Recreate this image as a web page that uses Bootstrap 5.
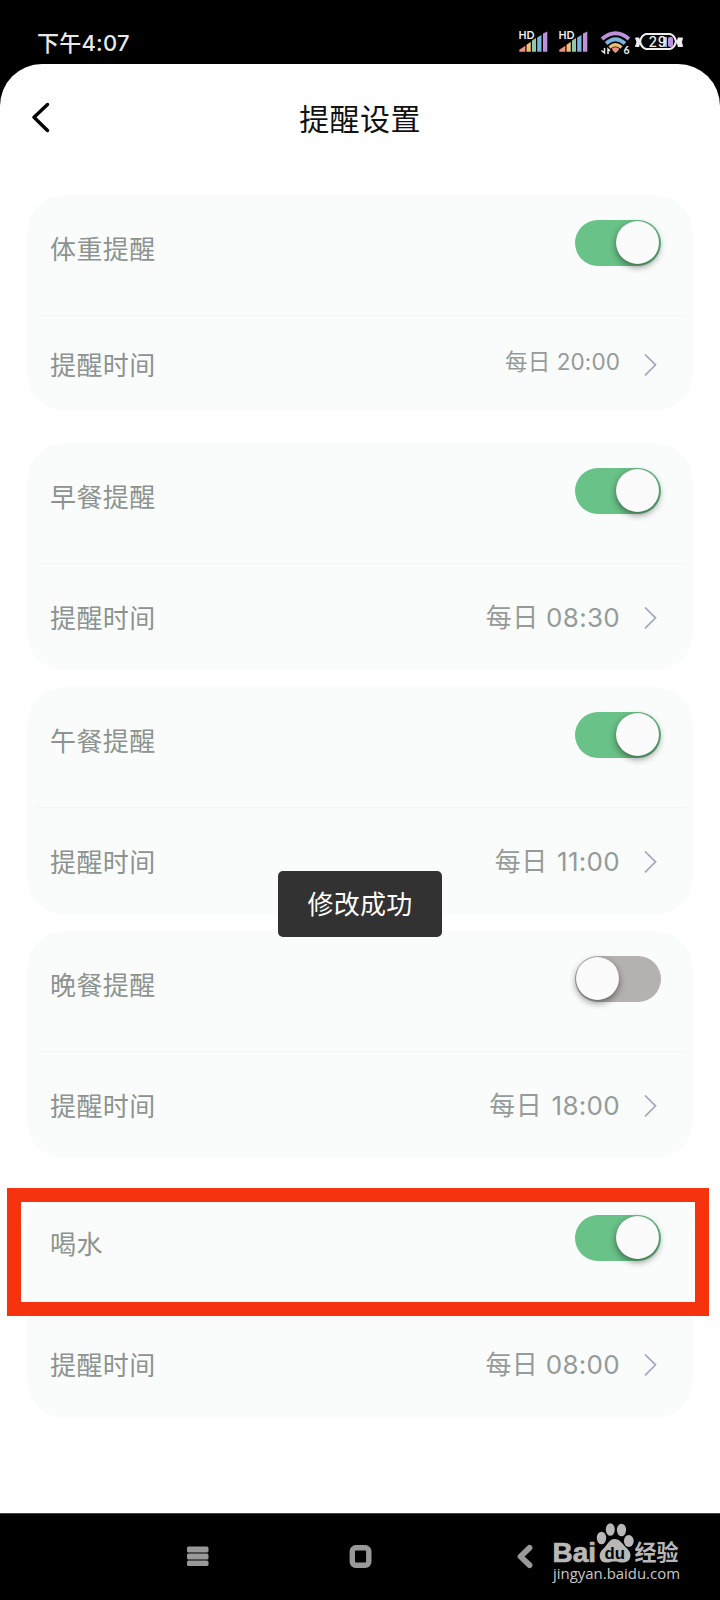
<!DOCTYPE html>
<html lang="zh-CN">
<head>
<meta charset="utf-8">
<meta name="viewport" content="width=device-width, initial-scale=1">
<title>提醒设置</title>
<link rel="stylesheet" href="https://cdn.jsdelivr.net/npm/bootstrap@5.3.0/dist/css/bootstrap.min.css">
<style>
  body { font-family: Inter, "Noto Sans CJK SC", sans-serif; background: #000; }
  svg { display: block; }
  .phone { width: 720px; height: 1600px; }
  .status-bar { height: 64px; padding: 19px 36px 0 37px; color: #e8e8e8; }
  .status-icons { margin-top: 6px; }
  .clock { font: 500 22px/48px Inter, "Noto Sans CJK SC", sans-serif; letter-spacing: .2px; }
  .screen { height: 1449px; border-radius: 42px 42px 0 0; background: #fff; }
  .title-bar { height: 131px; padding: 0 32px; }
  .title-bar h1 { font-size: 30px; line-height: 40px; color: #111; margin: 0; padding-top: 35px; letter-spacing: .4px; }
  .back-link { padding-top: 38px; width: 20px; }
  .remind { margin: 0 27px 16px; height: 228px; border: 0; border-radius: 38px; background: #fafcfb; }
  .remind.weight-card { height: 216px; margin-bottom: 32px; }
  .remind.gap-after { margin-bottom: 31px; }
  .row-a { height: 121px; margin: 0 6px 0 7px; padding: 25px 26px 0 16px; border-bottom: 1px solid #f5f7f6; }
  .row-b { margin: 0 8px 0 7px; padding: 35px 28px 0 16px; }
  .weight-card .row-b { padding-top: 30px; }
  .label-text { font-size: 26px; line-height: 40px; letter-spacing: .4px; color: #8c9390; }
  .row-a .label-text { padding-top: 10px; }
  .time-text { font-size: 26px; line-height: 37px; letter-spacing: .3px; color: #959b99; margin-right: 24px; }
  .narrow-digits { word-spacing: 2px; }
  .weight-card .time-text { font-size: 22.5px; line-height: 32px; letter-spacing: .1px; }
  .toggle { width: 86px; height: 46px; border-radius: 23px; padding: 1px 2px 1px 1px; background: #b5b1b1; }
  .toggle.on { background: #69c287; }
  .knob { width: 43px; height: 43px; border-radius: 50%; background: #fbfbfb; box-shadow: 0 3px 7px rgba(0,0,0,.45), 0 0 1px rgba(0,0,0,.2); }
  .frame-mark { left: 7px; top: 1188px; width: 702px; height: 128px; border: 14px solid #f5330f; }
  .toast-box { left: 278px; top: 871px; width: 164px; height: 66px; padding-top: 1px; border-radius: 5px; background: #323232; color: #fff; font-size: 26px; letter-spacing: .3px; }
  .sys-nav { height: 87px; border-top: 1px solid #444; padding: 0 0 2px 186px; }
  .wm { left: 548px; top: 1518px; }
</style>
</head>
<body>
<div class="phone position-relative overflow-hidden">
  <header class="status-bar d-flex justify-content-between align-items-start">
    <span class="clock">下午4:07</span>
    <svg class="status-icons" width="166" height="34" viewBox="518 25 166 34">
      <defs>
        <g id="signal">
          <path d="M.3 51.700v-2l6-4v6z" fill="#ee9183"/><path d="M7.500 51.700v-7l4.300-3v10z" fill="#efbd78"/>
          <path d="M13 51.700V40.500l4-2.500v13.700z" fill="#8cc9ae"/><path d="M18.200 51.700V37.500l4.300-2.500v16.700z" fill="#79b4dc"/>
          <path d="M24 51.700V33.500l4.300-2v20.200z" fill="#bd91dc"/>
        </g>
      </defs>
      <use href="#signal" x="519"/><use href="#signal" x="559"/>
      <g fill="#eee" font-family="Lato, sans-serif" font-weight="700" stroke="#000" stroke-width="2" paint-order="stroke">
        <text x="518.500" y="39.300" font-size="10.500" textLength="16" lengthAdjust="spacingAndGlyphs">HD</text>
        <text x="558.500" y="39.300" font-size="10.500" textLength="16" lengthAdjust="spacingAndGlyphs">HD</text>
        <text x="623.500" y="54" font-size="10.500">6</text>
      </g>
      <g fill="none" stroke-width="3.800">
        <path d="M602 39Q615.500 27.500 629 39" stroke="#bd91dc"/>
        <path d="M606 43.500Q615.500 35 625 43.500" stroke="#79b4dc"/>
        <path d="M609.500 47.500Q615.500 42 621.500 47.500" stroke="#efbd78" stroke-width="3.200"/>
      </g>
      <path d="M612 48.500q3.500-2.500 7 0q0 2-3.500 4.500q-3.500-2.500-3.500-4.500z" fill="#ee9183"/>
      <path d="M604.500 48v5l-3-2.500M608 54v-5l2 2" fill="none" stroke="#eee" stroke-width="1.500"/>
      <path d="M646 34h24q4.500 1 6 7.500q-1.500 6.500-6 7.500h-24q-4.500-1-6-7.500q1.500-6.500 6-7.500z" fill="#050505" stroke="#eee" stroke-width="2.200"/>
      <path d="M635.500 38h3.500v2h1v4h-1v2.500h-3.500l1.500-4.500zM682.500 38H678v2h-1v4h1v2.500h4.500l-1-4.500z" fill="#eee" stroke="#eee" stroke-linejoin="round"/>
      <rect x="663" y="37" width="4" height="10" fill="#79b4dc"/><rect x="668" y="37" width="5" height="10" rx="2" fill="#bd91dc"/>
      <text x="648.500" y="47" font-size="14" font-weight="500" fill="#eee" font-family="Inter, sans-serif" textLength="18">29</text>
    </svg>
  </header>

  <main class="screen">
    <div class="title-bar position-relative d-flex">
      <a class="back-link" href="#" aria-label="返回"><svg width="20" height="32" viewBox="0 0 20 32"><path d="M15.500 2.500L2 15.300l13.500 13.200" fill="none" stroke="#000" stroke-width="3.400" stroke-linecap="round" stroke-linejoin="round"/></svg></a>
      <h1 class="flex-fill text-center fw-normal">提醒设置</h1>
      <span class="back-link"></span>
    </div>

    <section class="card remind weight-card">
      <div class="row-a d-flex justify-content-between align-items-start"><span class="label-text">体重提醒</span><span class="toggle on d-flex justify-content-end"><span class="knob"></span></span></div>
      <div class="row-b d-flex align-items-start"><span class="label-text me-auto">提醒时间</span><span class="time-text">每日 20:00</span><svg class="mt-2" width="13" height="22" viewBox="0 0 13 22"><path d="M1 .5l10.500 10.300L1 21.300" fill="none" stroke="#a1a8c4" stroke-width="1.700"/></svg></div>
    </section>
    <section class="card remind">
      <div class="row-a d-flex justify-content-between align-items-start"><span class="label-text">早餐提醒</span><span class="toggle on d-flex justify-content-end"><span class="knob"></span></span></div>
      <div class="row-b d-flex align-items-start"><span class="label-text me-auto">提醒时间</span><span class="time-text">每日 08:30</span><svg class="mt-2" width="13" height="22" viewBox="0 0 13 22"><path d="M1 .5l10.500 10.300L1 21.300" fill="none" stroke="#a1a8c4" stroke-width="1.700"/></svg></div>
    </section>
    <section class="card remind">
      <div class="row-a d-flex justify-content-between align-items-start"><span class="label-text">午餐提醒</span><span class="toggle on d-flex justify-content-end"><span class="knob"></span></span></div>
      <div class="row-b d-flex align-items-start"><span class="label-text me-auto">提醒时间</span><span class="time-text narrow-digits">每日 11:00</span><svg class="mt-2" width="13" height="22" viewBox="0 0 13 22"><path d="M1 .5l10.500 10.300L1 21.300" fill="none" stroke="#a1a8c4" stroke-width="1.700"/></svg></div>
    </section>
    <section class="card remind gap-after">
      <div class="row-a d-flex justify-content-between align-items-start"><span class="label-text">晚餐提醒</span><span class="toggle d-flex"><span class="knob"></span></span></div>
      <div class="row-b d-flex align-items-start"><span class="label-text me-auto">提醒时间</span><span class="time-text narrow-digits">每日 18:00</span><svg class="mt-2" width="13" height="22" viewBox="0 0 13 22"><path d="M1 .5l10.500 10.300L1 21.300" fill="none" stroke="#a1a8c4" stroke-width="1.700"/></svg></div>
    </section>
    <section class="card remind">
      <div class="row-a d-flex justify-content-between align-items-start"><span class="label-text">喝水</span><span class="toggle on d-flex justify-content-end"><span class="knob"></span></span></div>
      <div class="row-b d-flex align-items-start"><span class="label-text me-auto">提醒时间</span><span class="time-text">每日 08:00</span><svg class="mt-2" width="13" height="22" viewBox="0 0 13 22"><path d="M1 .5l10.500 10.300L1 21.300" fill="none" stroke="#a1a8c4" stroke-width="1.700"/></svg></div>
    </section>
  </main>

  <nav class="sys-nav d-flex align-items-center">
    <svg width="350" height="26" viewBox="186 1543 350 26">
      <g fill="#999"><rect x="187" y="1546.500" width="21.500" height="6" rx="1.500"/><rect x="187" y="1553.500" width="21.500" height="6" rx="1.500"/><rect x="187" y="1560.500" width="21.500" height="5.500" rx="1.500"/></g>
      <rect x="352.300" y="1547.800" width="16.500" height="17.500" rx="3.500" fill="none" stroke="#999" stroke-width="5.400"/>
      <path d="M529.500 1547.800l-9 8.700 9 8.700" fill="none" stroke="#999" stroke-width="5.800" stroke-linecap="round" stroke-linejoin="round"/>
    </svg>
  </nav>

  <div class="frame-mark position-absolute"></div>
  <div class="toast-box position-absolute d-flex align-items-center justify-content-center" role="status">修改成功</div>
  <svg class="wm position-absolute" width="140" height="72" viewBox="548 1518 140 72" fill="#b8b8b8">
    <text x="552.500" y="1562" font-family="'Liberation Sans', sans-serif" font-size="28" font-weight="700" textLength="43.500" lengthAdjust="spacingAndGlyphs" stroke="#b8b8b8" stroke-width=".7">Bai</text>
    <ellipse cx="601.500" cy="1538" rx="4.700" ry="6.300"/><ellipse cx="610.300" cy="1529.500" rx="4.500" ry="6.300"/>
    <ellipse cx="621.500" cy="1530" rx="4.600" ry="6.300"/><ellipse cx="628.800" cy="1541" rx="4.900" ry="6"/>
    <path d="M614.500 1539c5.500 0 7.500 4.500 11 8 4 3.500 6 7 4.500 11-1.500 4-5.500 5-9 4.500-2.500-.5-4-1-6.500-1s-4 .5-6.500 1c-4 .5-7-.5-8-4.500-1-4 .5-7 4-10 4-3.500 5-9 10.500-9z"/>
    <text x="604.500" y="1558.500" font-family="'Liberation Sans', sans-serif" font-size="17" font-weight="700" fill="#050505" textLength="20.500" lengthAdjust="spacingAndGlyphs">du</text>
    <text x="634.500" y="1560" font-family="'Noto Sans CJK SC', sans-serif" font-size="22" font-weight="700" textLength="44">经验</text>
    <text x="553" y="1579" font-family="'Open Sans', sans-serif" font-size="14.500" textLength="127" lengthAdjust="spacingAndGlyphs" fill="#c8c8c8">jingyan.baidu.com</text>
  </svg>
</div>
<script src="https://cdn.jsdelivr.net/npm/bootstrap@5.3.0/dist/js/bootstrap.bundle.min.js"></script>
</body>
</html>
